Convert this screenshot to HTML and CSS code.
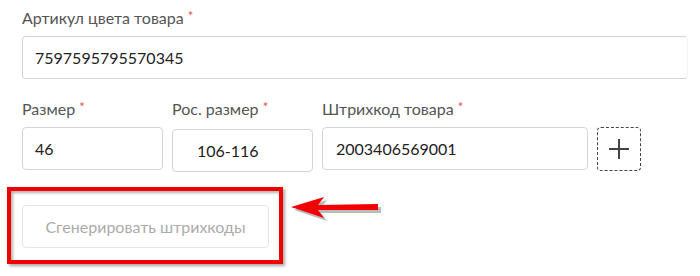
FILE: index.html
```html
<!DOCTYPE html>
<html>
<head>
<meta charset="UTF-8">
<title>Штрихкоды</title>
<link rel="stylesheet" href="styles.css">
</head>
<body>
	<div class="form">
		<div class="field">
			<label class="fieldLabel">Артикул цвета товара <span class="req">*</span></label>
			<div class="dataField wide">7597595795570345</div>
		</div>

		<div class="row">
			<div class="field">
				<label class="fieldLabel">Размер <span class="req">*</span></label>
				<div class="dataField small">46</div>
			</div>
			<div class="field">
				<label class="fieldLabel">Рос. размер <span class="req">*</span></label>
				<div class="dataField small shifted">106-116</div>
			</div>
			<div class="field">
				<label class="fieldLabel">Штрихкод товара <span class="req">*</span></label>
				<div class="barcodeRow">
					<div class="dataField barcode">2003406569001</div>
					<div class="addButton">
						<svg width="22" height="22" viewBox="0 0 22 22"><path d="M11 1v20M1 11h20" stroke="#444" stroke-width="2" fill="none"/></svg>
					</div>
				</div>
			</div>
		</div>

		<div class="generateWrap">
			<div class="generateButton">Сгенерировать штрихкоды</div>
			<div class="highlight"></div>
		</div>
	</div>

	<svg class="arrow" width="100" height="30" viewBox="0 0 100 30">
		<g transform="translate(2,2)">
			<path d="M2 12 L35 2 L29 10 L89 9 L89 15 L29 15 L35 23 Z" fill="#777" opacity="0.5"/>
		</g>
		<path d="M1 11 L34 1 L28 9 L88 8 L88 14 L28 14 L34 22 Z" fill="#f20000"/>
	</svg>
</body>
</html>
```

FILE: styles.css
```css
*{
	box-sizing: border-box;
}
body{
	margin: 0;
	background: #fff;
	font-family: Lato, 'Open Sans', sans-serif;
	position: relative;
	height: 276px;
	overflow: hidden;
}
.form{
	padding: 6px 0 0 22px;
}
.field{
	display: flex;
	flex-direction: column;
}
.fieldLabel{
	font-size: 16px;
	line-height: 20px;
	color: #555;
	margin-bottom: 8px;
}
.req{
	color: #e0555a;
	font-size: 13px;
	vertical-align: 3px;
}
.dataField{
	height: 43px;
	border: 1px solid #d4d4d4;
	border-radius: 4px;
	font-size: 16px;
	color: #222;
	display: flex;
	align-items: center;
	padding-left: 12px;
}
.wide{
	width: 666px;
	border-right-color: #f4f4f4;
}
.row{
	display: flex;
	gap: 9px;
	margin-top: 18px;
}
.small{
	width: 141px;
}
.shifted{
	margin-top: 2px;
	padding-left: 24px;
}
.barcodeRow{
	display: flex;
	gap: 9px;
}
.barcode{
	width: 266px;
	padding-left: 13px;
}
.addButton{
	width: 44px;
	height: 44px;
	border: 1px dashed #444;
	border-radius: 4px;
	display: flex;
	align-items: center;
	justify-content: center;
}
.generateWrap{
	position: relative;
	margin-top: 33px;
	width: 247px;
}
.generateButton{
	height: 43px;
	border: 1px solid #e6e6e6;
	border-radius: 4px;
	color: #ababab;
	font-size: 16px;
	display: flex;
	align-items: center;
	justify-content: center;
}
.highlight{
	position: absolute;
	left: -15px;
	top: -18px;
	width: 276px;
	height: 77px;
	border: 4px solid #f20000;
	box-shadow: 2px 2px 3px rgba(0,0,0,0.35), inset 2px 2px 3px rgba(0,0,0,0.3);
}
.arrow{
	position: absolute;
	left: 290px;
	top: 196px;
}
```
